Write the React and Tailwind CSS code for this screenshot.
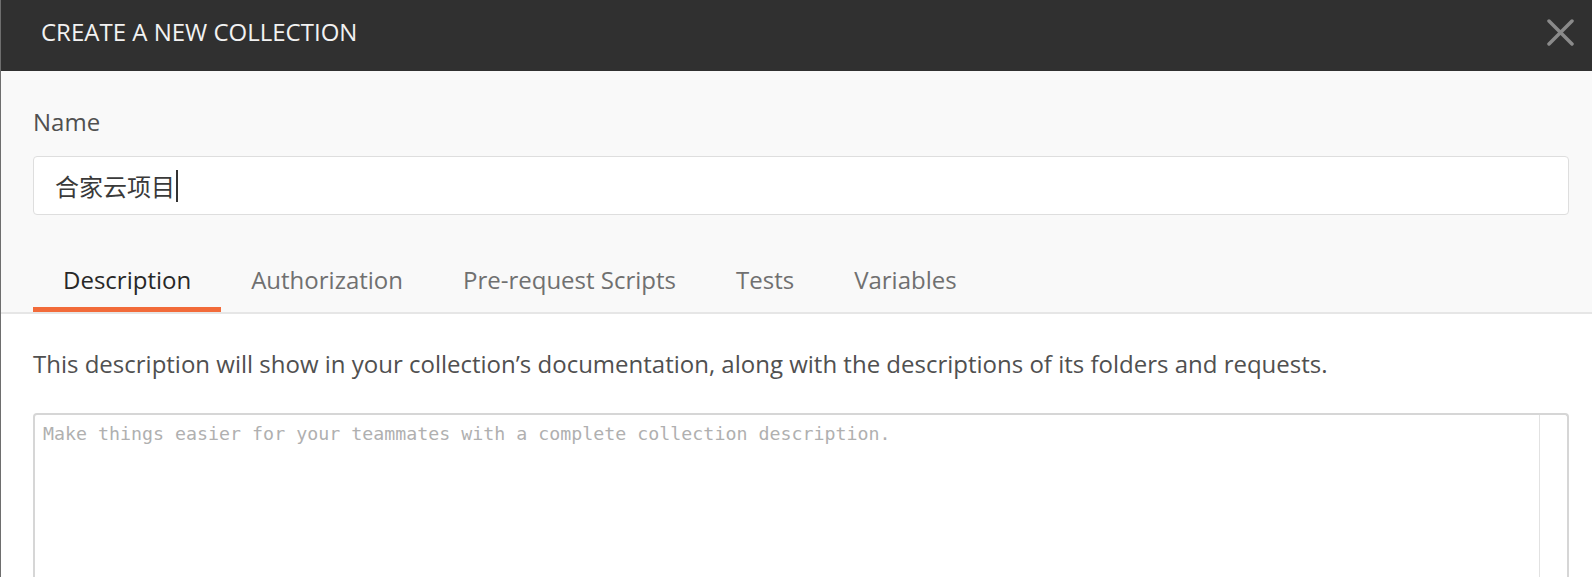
import React from "react";

export default function App() {
  const tabs = ["Description", "Authorization", "Pre-request Scripts", "Tests", "Variables"];
  return (
    <div
      className="w-[1592px] h-[577px] overflow-hidden flex flex-col border-l border-[#6e6e6e] bg-white"
      style={{ fontFamily: '"Open Sans", "Noto Sans CJK SC", sans-serif' }}
    >
      <div className="h-[71px] shrink-0 bg-[#303030] flex items-center justify-between pl-[40px] pr-[18px] pb-[7px]">
        <div className="text-[24px] leading-[32px] text-[#f2f2f2]">CREATE A NEW COLLECTION</div>
        <svg width="27" height="27" viewBox="0 0 27 27">
          <path d="M2 2 L25 25 M25 2 L2 25" stroke="#8a8a8a" strokeWidth="3.5" strokeLinecap="round" />
        </svg>
      </div>
      <div className="bg-[#f9f9f9] pl-[32px] pr-[23px] pt-[36px] border-b-2 border-[#e6e6e6]">
        <div className="text-[24px] leading-[30px] text-[#505050]">Name</div>
        <div className="mt-[19px] h-[59px] bg-white border-[1.5px] border-[#dedede] rounded-[4px] flex items-center pl-[21px]">
          <span
            className="text-[24px] leading-[32px] text-[#3a3a3a]"
            style={{ fontFamily: '"Noto Sans CJK SC", sans-serif' }}
          >
            合家云项目
          </span>
          <span className="w-[2px] h-[32px] bg-[#333] ml-[1px]"></span>
        </div>
        <div className="mt-[44px] flex">
          {tabs.map((t, i) => (
            <div
              key={t}
              className={
                "px-[30px] h-[53px] flex items-start pt-[5px] text-[24px] leading-[32px] border-b-[5px] " +
                (i === 0 ? "border-[#f26b3a] text-[#282828]" : "border-transparent text-[#707070]")
              }
            >
              {t}
            </div>
          ))}
        </div>
      </div>
      <div className="bg-white pl-[32px] pr-[23px] flex-1 flex flex-col">
        <div className="mt-[34px] text-[24px] leading-[32px] text-[#505050]">
          This description will show in your collection’s documentation, along with the descriptions of its folders and requests.
        </div>
        <div className="mt-[33px] flex-1 border-2 border-b-0 border-[#d6d6d6] rounded-t-[4px] flex">
          <div
            className="flex-1 pl-[8px] pt-[7px] text-[18.3px] leading-[24px] text-[#b0b0b0]"
            style={{ fontFamily: '"DejaVu Sans Mono", monospace' }}
          >
            Make things easier for your teammates with a complete collection description.
          </div>
          <div className="w-[28px] border-l border-[#e2e2e2]"></div>
        </div>
      </div>
    </div>
  );
}
